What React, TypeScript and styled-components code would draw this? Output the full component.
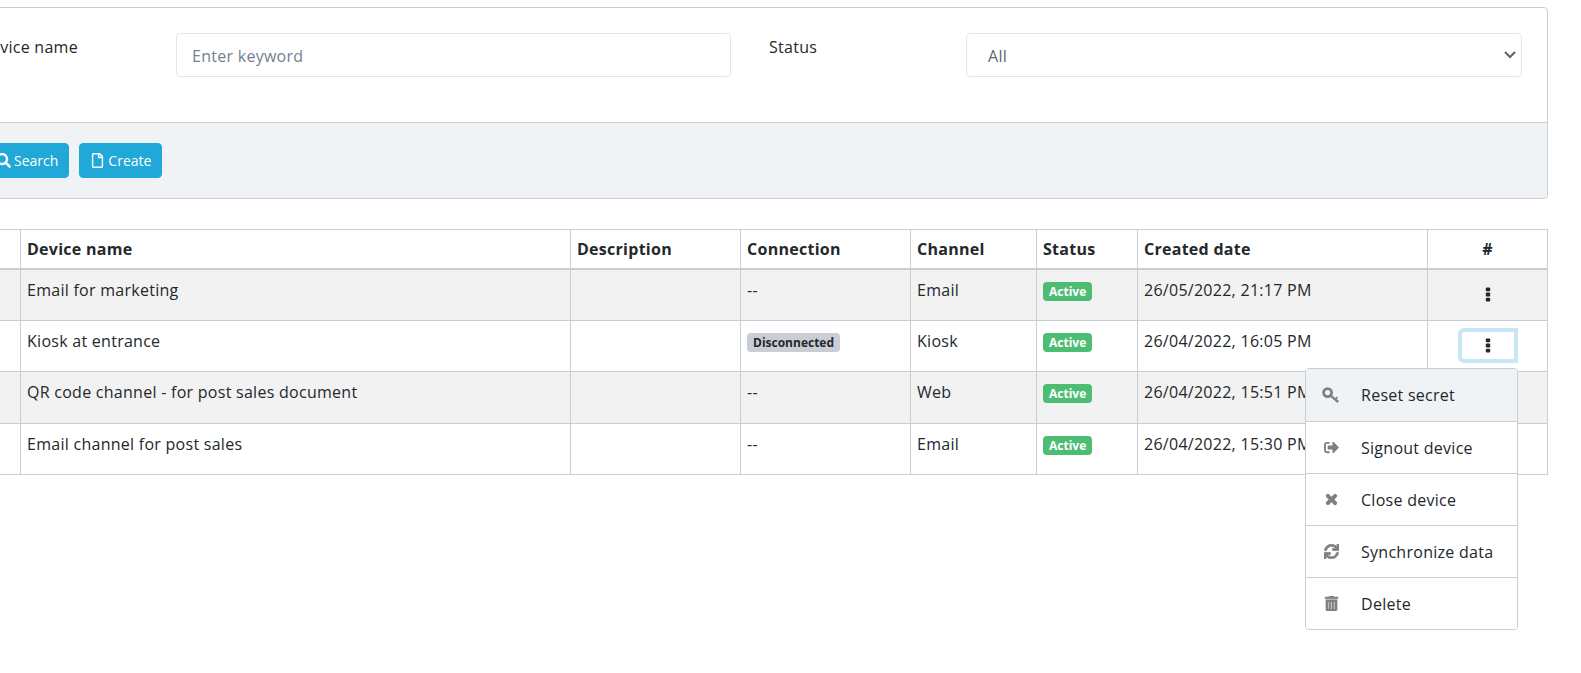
import React from "react";
import styled, { createGlobalStyle } from "styled-components";
import { FaSearch, FaRegFile, FaSignOutAlt, FaTimes, FaSync, FaTrashAlt } from "react-icons/fa";

const Global = createGlobalStyle`
  html, body { margin: 0; padding: 0; background: #fff; overflow: hidden; height: 100%; }
  body { font-family: "Open Sans", "Liberation Sans", sans-serif; font-size: 16px; letter-spacing: 0.27px; color: #23282c; }
`;

const Page = styled.div`
  width: 1568px;
  margin-left: -20px;
  padding-top: 7px;
  position: relative;
`;

const Card = styled.section`
  border: 1px solid #c8ced3;
  border-radius: 4px;
  background: #fff;
  overflow: hidden;
`;

const FormRow = styled.div`
  height: 114px;
  box-sizing: border-box;
  padding: 25px 25px 0 0;
  display: grid;
  grid-template-columns: 195px 555px 38px 197px 1fr;
  align-items: start;
`;

const Label = styled.label<{ $col: number; $indent?: number }>`
  line-height: 24px;
  padding-top: 2px;
  margin-left: ${(p) => p.$indent ?? 0}px;
  white-space: nowrap;
  grid-column: ${(p) => p.$col};
`;

const TextInput = styled.input`
  box-sizing: border-box;
  width: 100%;
  height: 44px;
  border: 1px solid #e4e7ea;
  border-radius: 4px;
  padding: 2px 15px 0;
  font: inherit;
  letter-spacing: inherit;
  color: #5c6873;
  outline: none;
  &::placeholder { color: #73818f; opacity: 1; }
`;

const SelectWrap = styled.div`
  position: relative;
  grid-column: 5;
`;

const Select = styled.select`
  box-sizing: border-box;
  width: 100%;
  height: 44px;
  appearance: none;
  background: #fff;
  border: 1px solid #e4e7ea;
  border-radius: 4px;
  padding: 2px 21px 0;
  font: inherit;
  letter-spacing: inherit;
  color: #5c6873;
  outline: none;
`;

const Chevron = styled.svg`
  position: absolute;
  right: 5px;
  top: 17px;
  width: 14px;
  height: 10px;
`;

const Footer = styled.div`
  height: 76px;
  box-sizing: border-box;
  background: #f0f3f5;
  border-top: 1px solid #c8ced3;
  padding: 20px 4px 0;
  display: flex;
  gap: 10px;
  align-items: flex-start;
`;

const Button = styled.button`
  box-sizing: border-box;
  height: 35px;
  border: 1px solid #20a8d8;
  background: #20a8d8;
  color: #fff;
  border-radius: 4px;
  padding: 0 10px;
  display: inline-flex;
  align-items: center;
  gap: 3px;
  font: inherit;
  font-size: 14px;
  letter-spacing: 0;
  svg { font-size: 15px; }
`;

const Table = styled.table`
  margin-top: 30px;
  width: calc(100% - 1px);
  table-layout: fixed;
  border-collapse: collapse;
  border: 1px solid #c8ced3;
`;

const Th = styled.th<{ $center?: boolean }>`
  height: 39px;
  box-sizing: border-box;
  padding: 0 6px;
  border: 1px solid #c8ced3;
  border-bottom: 2px solid #c8ced3;
  text-align: ${(p) => (p.$center ? "center" : "left")};
  font-weight: 700;
`;

const Row = styled.tr<{ $striped: boolean }>`
  background: ${(p) => (p.$striped ? "#f2f2f2" : "#fff")};
`;

const Td = styled.td<{ $center?: boolean }>`
  height: 51.5px;
  box-sizing: border-box;
  padding: 8px 6px 0;
  border: 1px solid #c8ced3;
  vertical-align: top;
  line-height: 24px;
  white-space: nowrap;
  text-align: ${(p) => (p.$center ? "center" : "left")};
`;

const Badge = styled.span<{ $tone: "green" | "gray" }>`
  display: inline-block;
  padding: 0 6px;
  height: 19px;
  line-height: 19px;
  border-radius: 4px;
  font-size: 12px;
  font-weight: 700;
  letter-spacing: 0;
  vertical-align: middle;
  background: ${(p) => (p.$tone === "green" ? "#4dbd74" : "#c8ced3")};
  color: ${(p) => (p.$tone === "green" ? "#fff" : "#23282c")};
`;

const MoreButton = styled.button<{ $focused?: boolean }>`
  box-sizing: border-box;
  width: 60px;
  height: 35px;
  margin-top: -1px;
  border: 4px solid ${(p) => (p.$focused ? "#c6e7f3" : "transparent")};
  border-radius: 6px 0 0 6px;
  background: transparent;
  color: #23282c;
  display: inline-flex;
  align-items: center;
  justify-content: center;
  padding: 0;
`;

const Menu = styled.div`
  position: absolute;
  left: 1325px;
  top: 368px;
  width: 213px;
  box-sizing: border-box;
  background: #fff;
  border: 1px solid #c8ced3;
  border-radius: 4px;
  overflow: hidden;
`;

const MenuItem = styled.div<{ $active?: boolean }>`
  height: 52px;
  box-sizing: border-box;
  display: flex;
  align-items: center;
  padding: 0 10px 0 16px;
  gap: 21px;
  white-space: nowrap;
  background: ${(p) => (p.$active ? "#f0f3f5" : "#fff")};
  & + & { border-top: 1px solid #c8ced3; }
`;

const MenuIcon = styled.span<{ $weight?: number }>`
  width: 18px;
  display: inline-flex;
  justify-content: center;
  color: #808080;
  font-size: 15px;
  svg { stroke-width: ${(p) => p.$weight ?? 0}; }
`;

const DotsIcon = () => (
  <svg width="6" height="15" viewBox="0 0 6 15" aria-hidden="true">
    <rect x="0.8" y="0.5" width="4.4" height="3.8" rx="1" fill="currentColor" />
    <rect x="0.8" y="5.6" width="4.4" height="3.8" rx="1" fill="currentColor" />
    <rect x="0.8" y="10.7" width="4.4" height="3.8" rx="1" fill="currentColor" />
  </svg>
);

const KeyIcon = () => (
  <svg width="18" height="17" viewBox="0 0 18 17" aria-hidden="true">
    <circle cx="5.6" cy="5.6" r="4" fill="none" stroke="currentColor" strokeWidth="2.8" />
    <path d="M8.6 8.6l7.6 6.4" fill="none" stroke="currentColor" strokeWidth="2.4" />
    <path d="M13 12.6l2.4-2.4" fill="none" stroke="currentColor" strokeWidth="1.8" />
  </svg>
);

const rows = [
  { name: "Email for marketing", conn: "--", channel: "Email", date: "26/05/2022, 21:17 PM" },
  { name: "Kiosk at entrance", conn: "Disconnected", channel: "Kiosk", date: "26/04/2022, 16:05 PM" },
  { name: "QR code channel - for post sales document", conn: "--", channel: "Web", date: "26/04/2022, 15:51 PM" },
  { name: "Email channel for post sales", conn: "--", channel: "Email", date: "26/04/2022, 15:30 PM" },
];

const widths = [40, 550, 170, 170, 126, 101, 290, 120];

export default function App() {
  return (
    <>
      <Global />
      <Page>
        <Card>
          <FormRow>
            <Label $col={1} $indent={-2}>Device name</Label>
            <TextInput placeholder="Enter keyword" />
            <Label $col={4}>Status</Label>
            <SelectWrap>
              <Select defaultValue="All"><option>All</option></Select>
              <Chevron viewBox="0 0 14 10"><path d="M2 2l5 5 5-5" fill="none" stroke="#5c6873" strokeWidth="2.2" /></Chevron>
            </SelectWrap>
          </FormRow>
          <Footer>
            <Button><FaSearch />Search</Button>
            <Button><FaRegFile />Create</Button>
          </Footer>
        </Card>
        <Table>
          <colgroup>{widths.map((w, i) => <col key={i} style={{ width: w }} />)}</colgroup>
          <thead>
            <tr>
              <Th /><Th>Device name</Th><Th>Description</Th><Th>Connection</Th><Th>Channel</Th><Th>Status</Th><Th>Created date</Th><Th $center>#</Th>
            </tr>
          </thead>
          <tbody>
            {rows.map((r, i) => (
              <Row key={r.name} $striped={i % 2 === 0}>
                <Td />
                <Td>{r.name}</Td>
                <Td />
                <Td>{r.conn === "--" ? "--" : <Badge $tone="gray">{r.conn}</Badge>}</Td>
                <Td>{r.channel}</Td>
                <Td><Badge $tone="green">Active</Badge></Td>
                <Td>{r.date}</Td>
                <Td $center>
                  {i < 2 && <MoreButton $focused={i === 1}><DotsIcon /></MoreButton>}
                </Td>
              </Row>
            ))}
          </tbody>
        </Table>
        <Menu>
          <MenuItem $active><MenuIcon><KeyIcon /></MenuIcon>Reset secret</MenuItem>
          <MenuItem><MenuIcon><FaSignOutAlt /></MenuIcon>Signout device</MenuItem>
          <MenuItem><MenuIcon $weight={40}><FaTimes /></MenuIcon>Close device</MenuItem>
          <MenuItem><MenuIcon $weight={25}><FaSync /></MenuIcon>Synchronize data</MenuItem>
          <MenuItem><MenuIcon $weight={15}><FaTrashAlt /></MenuIcon>Delete</MenuItem>
        </Menu>
      </Page>
    </>
  );
}
